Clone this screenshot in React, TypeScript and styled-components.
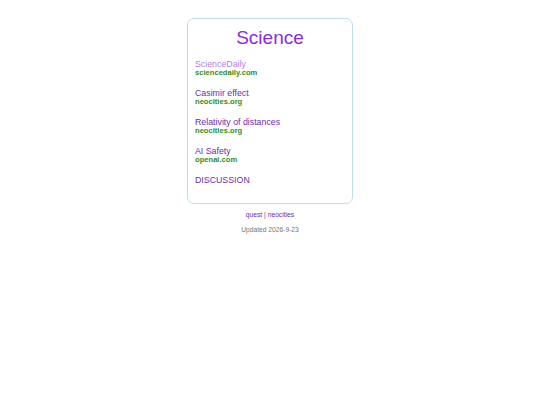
import styled, { createGlobalStyle } from 'styled-components';

const GlobalStyle = createGlobalStyle`
  html, body {
    margin: 0;
    padding: 0;
    background: #ffffff;
  }
  body {
    font-family: "Liberation Sans", Arial, sans-serif;
  }
`;

const Page = styled.div`
  display: flex;
  flex-direction: column;
  align-items: center;
  padding-top: 18px;
`;

const Card = styled.div`
  width: 166px;
  box-sizing: border-box;
  border: 1px solid #bfe0e8;
  border-radius: 7px;
  padding: 8px 7px 18px;
`;

const Title = styled.h1`
  margin: 0 0 10px;
  font-size: 19px;
  line-height: 22px;
  font-weight: 400;
  text-align: center;
  color: #8a2be2;
`;

const LinkList = styled.div`
  display: flex;
  flex-direction: column;
  gap: 11px;
`;

const Item = styled.div`
  display: flex;
  flex-direction: column;
`;

const ItemLink = styled.a<{ $visited?: boolean }>`
  font-size: 8.8px;
  line-height: 10px;
  color: ${(p) => (p.$visited ? '#b57ee2' : '#6a2db0')};
  text-decoration: none;
`;

const Domain = styled.span`
  font-size: 7.6px;
  line-height: 8px;
  font-weight: 700;
  color: #2f8f1e;
`;

const Footer = styled.div`
  margin-top: 6px;
  display: flex;
  flex-direction: column;
  align-items: center;
  gap: 6px;
  font-size: 6.7px;
  line-height: 9px;
`;

const FooterLinks = styled.div`
  color: #6a2db0;
`;

const FooterLink = styled.a`
  color: #6a2db0;
  text-decoration: none;
`;

const Updated = styled.div`
  color: #777777;
`;

const links = [
  { title: 'ScienceDaily', domain: 'sciencedaily.com', visited: true },
  { title: 'Casimir effect', domain: 'neocities.org' },
  { title: 'Relativity of distances', domain: 'neocities.org' },
  { title: 'AI Safety', domain: 'openai.com' },
];

const App = () => (
  <>
    <GlobalStyle />
    <Page>
      <Card>
        <Title>Science</Title>
        <LinkList>
          {links.map((l) => (
            <Item key={l.title}>
              <ItemLink href="#" $visited={l.visited}>
                {l.title}
              </ItemLink>
              <Domain>{l.domain}</Domain>
            </Item>
          ))}
          <Item>
            <ItemLink href="#">DISCUSSION</ItemLink>
          </Item>
        </LinkList>
      </Card>
      <Footer>
        <FooterLinks>
          <FooterLink href="#">quest</FooterLink> | <FooterLink href="#">neocities</FooterLink>
        </FooterLinks>
        <Updated>Updated 2026-9-23</Updated>
      </Footer>
    </Page>
  </>
);

export default App;
